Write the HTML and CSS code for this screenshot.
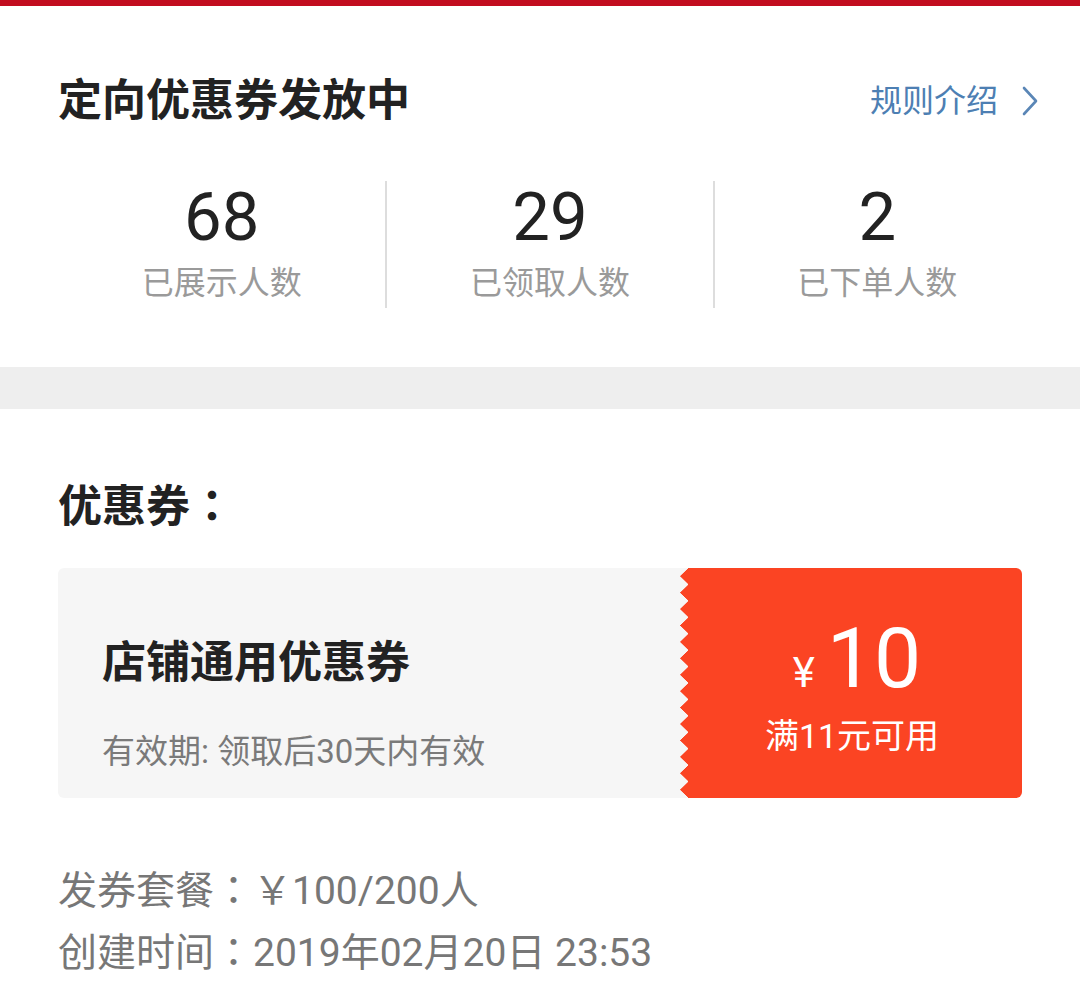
FILE: index.html
```html
<!DOCTYPE html>
<html lang="zh-CN">
<head>
<meta charset="utf-8">
<title>定向优惠券</title>
<link rel="stylesheet" href="styles.css">
</head>
<body>
<div class="topbar"></div>
<section class="summary">
  <div class="head">
    <h1 class="title">定向优惠券发放中</h1>
    <a class="rule-link">规则介绍<svg class="chev" width="16" height="30" viewBox="0 0 16 30"><path d="M2 2 L14 15 L2 28" fill="none" stroke="#5a86b6" stroke-width="2.6" stroke-linecap="round" stroke-linejoin="round"/></svg></a>
  </div>
  <div class="stats">
    <div class="stat"><div class="num">68</div><div class="label">已展示人数</div></div>
    <div class="stat"><div class="num">29</div><div class="label">已领取人数</div></div>
    <div class="stat"><div class="num">2</div><div class="label">已下单人数</div></div>
  </div>
</section>
<div class="band"></div>
<section class="coupons">
  <h2 class="sub-title">优惠券<span class="colon" lang="ja">：</span></h2>
  <div class="coupon">
    <div class="c-left">
      <div class="c-name">店铺通用优惠券</div>
      <div class="c-valid">有效期: 领取后30天内有效</div>
    </div>
    <div class="teeth"></div>
    <div class="c-right">
      <div class="amount"><span class="yen">¥</span><span class="val">10</span></div>
      <div class="cond">满11元可用</div>
    </div>
  </div>
  <div class="info">
    <div class="info-line">发券套餐<span class="colon" lang="ja">：</span>￥100/200人</div>
    <div class="info-line">创建时间<span class="colon" lang="ja">：</span>2019年02月20日 23:53</div>
  </div>
</section>
</body>
</html>
```

FILE: styles.css
```css
* { box-sizing: border-box; }
html, body {
  margin: 0;
  padding: 0;
  background: #ffffff;
  font-family: Roboto, "Noto Sans CJK SC", sans-serif;
  color: #222222;
}
.topbar {
  height: 6px;
  background: #c20d1f;
}
.summary {
  height: 361px;
  padding: 69px 40px 0 58px;
}
.head {
  height: 52px;
  display: flex;
  align-items: center;
  justify-content: space-between;
}
.title {
  margin: 0;
  font-size: 44px;
  line-height: 52px;
  font-weight: 700;
  color: #222;
}
.rule-link {
  display: flex;
  align-items: center;
  font-size: 32px;
  line-height: 40px;
  color: #4d7fb3;
}
.chev {
  margin-left: 24px;
  margin-right: 2px;
}
.stats {
  margin-top: 54px;
  display: grid;
  grid-template-columns: repeat(3, 1fr);
  height: 127px;
}
.stat {
  display: flex;
  flex-direction: column;
  align-items: center;
}
.stat + .stat {
  border-left: 2px solid #dddddd;
}
.num {
  font-size: 67px;
  line-height: 72px;
  height: 72px;
  color: #222;
}
.label {
  margin-top: 10px;
  font-size: 32px;
  line-height: 40px;
  color: #9a9a9a;
}
.band {
  height: 42px;
  background: #eeeeee;
}
.coupons {
  padding: 68px 58px 0;
}
.colon {
  font-family: "Noto Sans CJK JP", sans-serif;
}
.sub-title {
  margin: 0;
  height: 52px;
  font-size: 44px;
  line-height: 52px;
  font-weight: 700;
  color: #222;
}
.coupon {
  margin-top: 39px;
  height: 230px;
  display: flex;
}
.c-left {
  flex: 1;
  background: #f6f6f6;
  border-radius: 6px 0 0 6px;
  padding-left: 44px;
  display: flex;
  flex-direction: column;
}
.c-name {
  margin-top: 69px;
  height: 52px;
  font-size: 44px;
  line-height: 52px;
  font-weight: 700;
  color: #222;
}
.c-valid {
  margin-top: 43px;
  height: 40px;
  font-size: 33px;
  line-height: 40px;
  color: #7a7a7a;
}
.teeth {
  width: 10px;
  background-color: #f6f6f6;
  background-image: conic-gradient(from 0deg at 0 50%, transparent 0deg 45deg, #fb4423 45deg 135deg, transparent 135deg);
  background-size: 10px calc(100% / 14);
  background-repeat: repeat-y;
}
.c-right {
  width: 332px;
  background: #fb4423;
  border-radius: 0 6px 6px 0;
  display: flex;
  flex-direction: column;
  align-items: center;
  color: #ffffff;
  padding-right: 8px;
}
.amount {
  margin-top: 46px;
  margin-left: 10px;
  height: 90px;
  line-height: 90px;
  white-space: nowrap;
}
.yen {
  font-size: 42px;
  margin-right: 12px;
}
.val {
  font-size: 84px;
}
.cond {
  margin-top: 12px;
  height: 40px;
  font-size: 34px;
  line-height: 40px;
}
.info {
  margin-top: 58px;
}
.info-line {
  height: 62px;
  font-size: 39px;
  line-height: 62px;
  color: #777777;
}
```
